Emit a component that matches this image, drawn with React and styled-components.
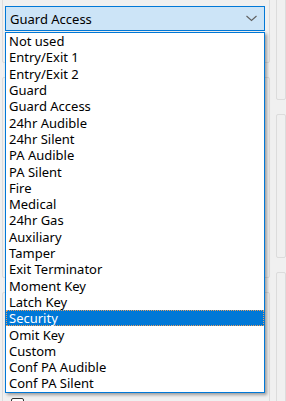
import React from 'react';
import styled, { createGlobalStyle } from 'styled-components';

const GlobalStyle = createGlobalStyle`
  html, body {
    margin: 0;
    padding: 0;
    background: #f0f0f0;
    overflow: hidden;
  }
  body {
    font-family: "Noto Sans", "DejaVu Sans", sans-serif;
  }
`

const Window = styled.div`
  position: relative;
  width: 286px;
  height: 401px;
  background: #f0f0f0;
  display: flex;
  gap: 6px;
  overflow: hidden;
`

const Column = styled.div`
  display: flex;
  flex-direction: column;
  gap: 14px;
  margin-top: ${p => p.top}px;
  width: ${p => p.width}px;
  margin-left: ${p => p.left || 0}px;
`

const GroupBox = styled.div`
  flex: 0 0 ${p => p.h}px;
  box-sizing: border-box;
  border: 1px solid #dcdcdc;
  border-radius: 2px;
  padding: ${p => p.pad || 0}px 0 0 8px;
`

const CheckBox = styled.div`
  width: 11px;
  height: 11px;
  border: 1px solid #333;
  border-radius: 2px;
  background: #fff;
`

const Combo = styled.div`
  position: absolute;
  left: 5px;
  top: 6px;
  width: 260px;
  display: flex;
  flex-direction: column;
`

const ComboField = styled.div`
  height: 25px;
  box-sizing: border-box;
  border: 1px solid #0078d7;
  background: #cce4f7;
  display: flex;
  align-items: center;
  justify-content: space-between;
  padding: 0 7px 0 4px;
  font-size: 13px;
  color: #000;
`

const List = styled.ul`
  list-style: none;
  margin: 1px 0 0 0;
  padding: 0;
  border: 1px solid #0078d7;
  background: #fff;
  box-shadow: 2px 2px 3px rgba(0, 0, 0, 0.35);
`

const Item = styled.li`
  height: 16.3px;
  line-height: 16px;
  box-sizing: border-box;
  padding-left: 2px;
  font-size: 13px;
  white-space: nowrap;
  color: ${p => (p.selected ? '#fff' : '#000')};
  background: ${p => (p.selected ? '#0078d7' : 'transparent')};
  border: 1px dotted ${p => (p.selected ? '#e8a060' : 'transparent')};
  display: flex;
  align-items: center;
`

const options = [
  'Not used',
  'Entry/Exit 1',
  'Entry/Exit 2',
  'Guard',
  'Guard Access',
  '24hr Audible',
  '24hr Silent',
  'PA Audible',
  'PA Silent',
  'Fire',
  'Medical',
  '24hr Gas',
  'Auxiliary',
  'Tamper',
  'Exit Terminator',
  'Moment Key',
  'Latch Key',
  'Security',
  'Omit Key',
  'Custom',
  'Conf PA Audible',
  'Conf PA Silent',
]

function Chevron() {
  return (
    <svg width="11" height="7" viewBox="0 0 11 7">
      <polyline points="0.5,1 5.5,5.5 10.5,1" fill="none" stroke="#606060" strokeWidth="1.1" />
    </svg>
  )
}

export default function App() {
  return (
    <>
      <GlobalStyle />
      <Window>
        <Column top={-10} width={274} left={2}>
          <GroupBox h={73} />
          <GroupBox h={201} />
          <GroupBox h={120} pad={105}>
            <CheckBox />
          </GroupBox>
        </Column>
        <Column top={-10} width={10}>
          <GroupBox h={110} />
          <GroupBox h={144} />
          <GroupBox h={150} />
        </Column>
        <Combo>
          <ComboField>
            <span>Guard Access</span>
            <Chevron />
          </ComboField>
          <List>
            {options.map(o => (
              <Item key={o} selected={o === 'Security'}>{o}</Item>
            ))}
          </List>
        </Combo>
      </Window>
    </>
  )
}
